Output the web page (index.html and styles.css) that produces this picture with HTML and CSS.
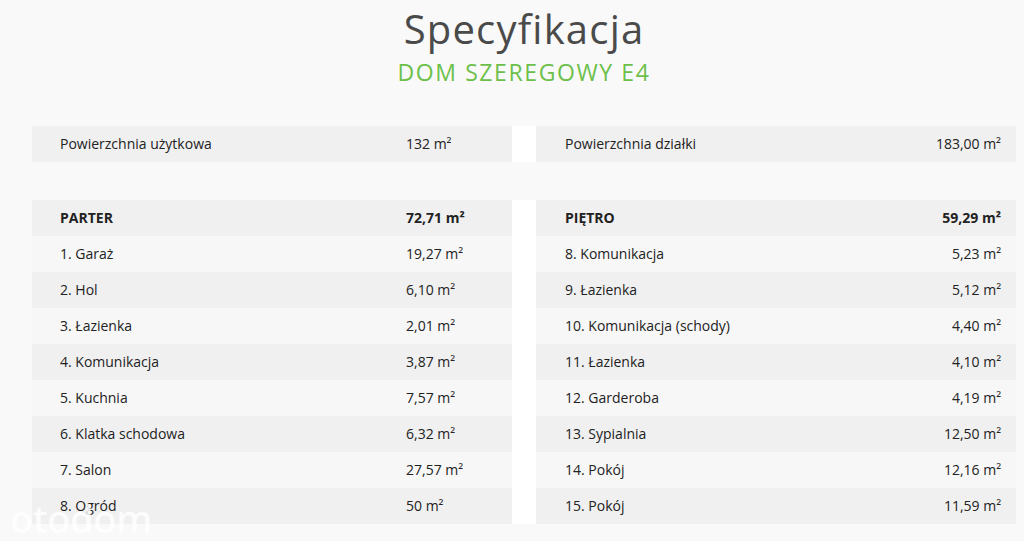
FILE: index.html
```html
<!DOCTYPE html>
<html lang="pl">
<head>
<meta charset="utf-8">
<title>Specyfikacja</title>
<link rel="stylesheet" href="styles.css">
</head>
<body>
<header class="head">
  <h1 class="title">Specyfikacja</h1>
  <h2 class="subtitle">DOM SZEREGOWY E4</h2>
</header>

<section class="pair summary">
  <div class="table left">
    <div class="row dark"><span class="label">Powierzchnia użytkowa</span><span class="val">132 m²</span></div>
  </div>
  <div class="divider"></div>
  <div class="table right">
    <div class="row dark"><span class="label">Powierzchnia działki</span><span class="val">183,00 m²</span></div>
  </div>
</section>

<section class="pair rooms">
  <div class="table left">
    <div class="row dark head-row"><span class="label">PARTER</span><span class="val">72,71 m²</span></div>
    <div class="row light"><span class="label">1. Garaż</span><span class="val">19,27 m²</span></div>
    <div class="row dark"><span class="label">2. Hol</span><span class="val">6,10 m²</span></div>
    <div class="row light"><span class="label">3. Łazienka</span><span class="val">2,01 m²</span></div>
    <div class="row dark"><span class="label">4. Komunikacja</span><span class="val">3,87 m²</span></div>
    <div class="row light"><span class="label">5. Kuchnia</span><span class="val">7,57 m²</span></div>
    <div class="row dark"><span class="label">6. Klatka schodowa</span><span class="val">6,32 m²</span></div>
    <div class="row light"><span class="label">7. Salon</span><span class="val">27,57 m²</span></div>
    <div class="row dark"><span class="label">8. Ogród</span><span class="val">50 m²</span></div>
  </div>
  <div class="divider"></div>
  <div class="table right">
    <div class="row dark head-row"><span class="label">PIĘTRO</span><span class="val">59,29 m²</span></div>
    <div class="row light"><span class="label">8. Komunikacja</span><span class="val">5,23 m²</span></div>
    <div class="row dark"><span class="label">9. Łazienka</span><span class="val">5,12 m²</span></div>
    <div class="row light"><span class="label">10. Komunikacja (schody)</span><span class="val">4,40 m²</span></div>
    <div class="row dark"><span class="label">11. Łazienka</span><span class="val">4,10 m²</span></div>
    <div class="row light"><span class="label">12. Garderoba</span><span class="val">4,19 m²</span></div>
    <div class="row dark"><span class="label">13. Sypialnia</span><span class="val">12,50 m²</span></div>
    <div class="row light"><span class="label">14. Pokój</span><span class="val">12,16 m²</span></div>
    <div class="row dark"><span class="label">15. Pokój</span><span class="val">11,59 m²</span></div>
  </div>
</section>

<div class="watermark">otodom</div>
</body>
</html>
```

FILE: styles.css
```css
* { box-sizing: border-box; }

html, body {
  margin: 0;
  padding: 0;
  background: #f9f9f9;
  font-family: "Open Sans", "Liberation Sans", sans-serif;
  color: #222;
  height: 541px;
  overflow: hidden;
}

body { position: relative; }

.head {
  text-align: center;
  padding-top: 2px;
  padding-left: 24px;
}

.title {
  margin: 0;
  font-family: "Open Sans", sans-serif;
  font-weight: 400;
  font-size: 40px;
  line-height: 54px;
  color: #4a4a4a;
  letter-spacing: 1.2px;
}

.subtitle {
  margin: 0;
  font-family: "Open Sans", sans-serif;
  font-weight: 400;
  font-size: 23px;
  line-height: 32px;
  color: #6cc04a;
  letter-spacing: 1.6px;
}

.pair {
  display: flex;
  margin-left: 32px;
  margin-right: 8px;
}

.summary { margin-top: 38px; }
.rooms { margin-top: 38px; }

.table {
  width: 480px;
  display: flex;
  flex-direction: column;
}

.divider {
  width: 24px;
  background: #ffffff;
}

.row {
  display: flex;
  align-items: center;
  height: 36px;
  font-size: 14px;
  padding-bottom: 2px;
}

.dark { background: #f0f0f0; }
.light { background: #f7f7f7; }

.label { flex: 1; }

.left .label { padding-left: 28px; }
.left .val { width: 106px; text-align: left; }

.right .label { padding-left: 29px; }
.right .val { padding-right: 15px; text-align: right; }

.head-row { font-weight: 700; }

.watermark {
  position: absolute;
  left: 10px;
  top: 502px;
  font-family: "Noto Sans", sans-serif;
  font-size: 38px;
  font-weight: 500;
  line-height: 32px;
  color: rgba(255, 255, 255, 0.85);
  letter-spacing: -0.3px;
}
```
